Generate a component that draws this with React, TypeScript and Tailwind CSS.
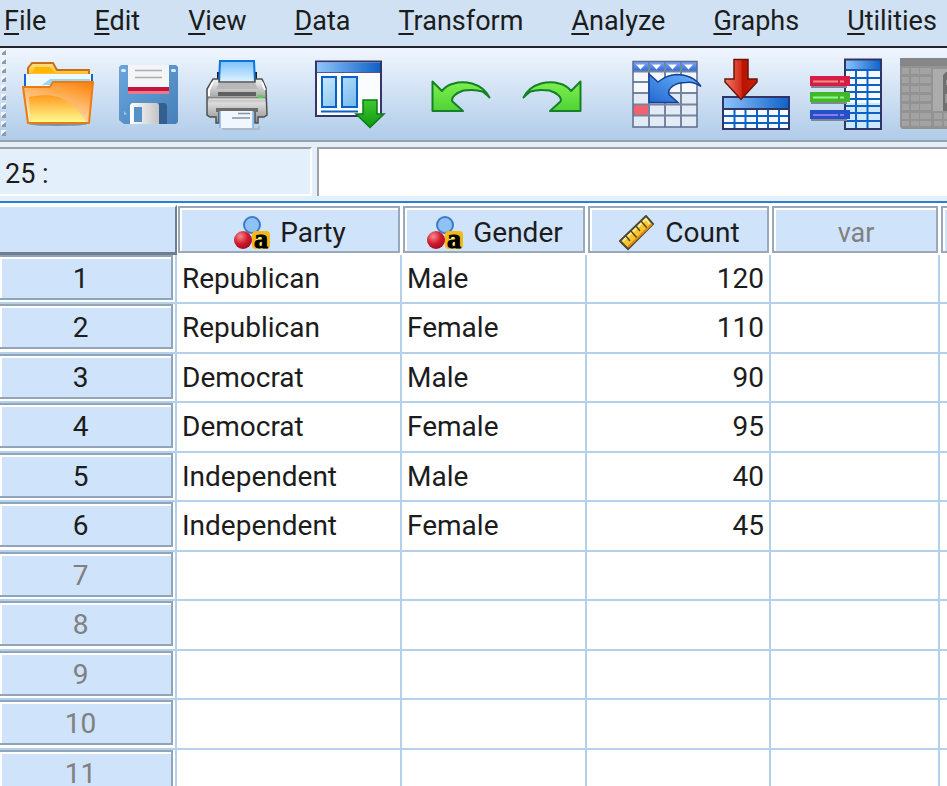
import { useState } from 'react';
import type { ReactNode } from 'react';

interface Column {
  name: string;
  type?: 'nominal' | 'scale';
  width: string;
}

interface Row {
  party: string;
  gender: string;
  count: number;
}

const menus = ['File', 'Edit', 'View', 'Data', 'Transform', 'Analyze', 'Graphs', 'Utilities'];

const columns: Column[] = [
  { name: 'Party', type: 'nominal', width: 'w-[225px]' },
  { name: 'Gender', type: 'nominal', width: 'w-[185px]' },
  { name: 'Count', type: 'scale', width: 'w-[184px]' },
  { name: 'var', width: 'w-[169px]' },
  { name: '', width: 'w-[169px]' },
];

const rows: Row[] = [
  { party: 'Republican', gender: 'Male', count: 120 },
  { party: 'Republican', gender: 'Female', count: 110 },
  { party: 'Democrat', gender: 'Male', count: 90 },
  { party: 'Democrat', gender: 'Female', count: 95 },
  { party: 'Independent', gender: 'Male', count: 40 },
  { party: 'Independent', gender: 'Female', count: 45 },
];

const rowNumbers = [1, 2, 3, 4, 5, 6, 7, 8, 9, 10, 11];

function ToolButton({ label, disabled, children }: { label: string; disabled?: boolean; children: ReactNode }) {
  return (
    <button type="button" aria-label={label} disabled={disabled} className="shrink-0">
      <svg width="72" height="72" viewBox="0 0 72 72" className="block overflow-visible">
        {children}
      </svg>
    </button>
  );
}

function Gradients() {
  return (
    <svg width="0" height="0" className="absolute" aria-hidden="true">
      <defs>
        <linearGradient id="folderFront" x1="1" y1="0" x2="0.5" y2="1">
          <stop offset="0" stopColor="#ff7a08" />
          <stop offset="0.3" stopColor="#ffa03c" />
          <stop offset="1" stopColor="#ffe9c4" />
        </linearGradient>
        <linearGradient id="folderShine" x1="0" y1="0" x2="0" y2="1">
          <stop offset="0" stopColor="#ff9a1e" />
          <stop offset="1" stopColor="#fffb90" />
        </linearGradient>
        <linearGradient id="folderBack" x1="0" y1="0" x2="0" y2="1">
          <stop offset="0" stopColor="#ffe08a" />
          <stop offset="1" stopColor="#ffae00" />
        </linearGradient>
        <linearGradient id="floppy" x1="0" y1="0" x2="1" y2="1">
          <stop offset="0" stopColor="#6aa5dc" />
          <stop offset="1" stopColor="#4680b8" />
        </linearGradient>
        <linearGradient id="metal" x1="0" y1="0" x2="1" y2="0">
          <stop offset="0" stopColor="#ffffff" />
          <stop offset="1" stopColor="#c4c4c4" />
        </linearGradient>
        <linearGradient id="printer" x1="0" y1="0" x2="0" y2="1">
          <stop offset="0" stopColor="#f4f4f4" />
          <stop offset="0.4" stopColor="#a8a8a8" />
          <stop offset="0.55" stopColor="#dcdcdc" />
          <stop offset="1" stopColor="#8d8d8d" />
        </linearGradient>
        <linearGradient id="sheet" x1="0" y1="0" x2="0" y2="1">
          <stop offset="0" stopColor="#7cc3fb" />
          <stop offset="1" stopColor="#e4f5ff" />
        </linearGradient>
        <linearGradient id="titleBar" x1="0" y1="0" x2="1" y2="0">
          <stop offset="0" stopColor="#8fc4fb" />
          <stop offset="1" stopColor="#0f62c8" />
        </linearGradient>
        <linearGradient id="pane" x1="0" y1="0" x2="1" y2="1">
          <stop offset="0" stopColor="#c8eafc" />
          <stop offset="1" stopColor="#74b8ec" />
        </linearGradient>
        <linearGradient id="greenFill" x1="0" y1="0" x2="0" y2="1">
          <stop offset="0" stopColor="#3fc830" />
          <stop offset="1" stopColor="#0d9a12" />
        </linearGradient>
        <linearGradient id="curve" x1="0" y1="0" x2="0" y2="1">
          <stop offset="0" stopColor="#7df04e" />
          <stop offset="1" stopColor="#50d236" />
        </linearGradient>
        <linearGradient id="blueCurve" x1="1" y1="0" x2="0" y2="1">
          <stop offset="0" stopColor="#6db8ff" />
          <stop offset="1" stopColor="#2468cf" />
        </linearGradient>
        <linearGradient id="redArrow" x1="0" y1="0" x2="1" y2="0">
          <stop offset="0" stopColor="#ef7a6c" />
          <stop offset="0.5" stopColor="#d52c1a" />
          <stop offset="0.55" stopColor="#b51400" />
          <stop offset="1" stopColor="#c8200c" />
        </linearGradient>
        <linearGradient id="gridHead" x1="0" y1="0" x2="0" y2="1">
          <stop offset="0" stopColor="#82a8f4" />
          <stop offset="1" stopColor="#2f6ce0" />
        </linearGradient>
        <radialGradient id="redBall" cx="0.35" cy="0.3" r="0.7">
          <stop offset="0" stopColor="#f58a92" />
          <stop offset="0.6" stopColor="#d01a2c" />
          <stop offset="1" stopColor="#a80c20" />
        </radialGradient>
      </defs>
    </svg>
  );
}

function OpenIcon() {
  return (
    <>
      <ellipse cx="36" cy="66" rx="29" ry="2" fill="#5c6470" opacity="0.6" />
      <path d="M6 20V10l4-5h21l4 7h32v9z" fill="url(#folderBack)" stroke="#c4701c" strokeWidth="2" />
      <path d="M10 15l3-6h15l5 6z" fill="#ffb700" />
      <path d="M3 16h67v16H3z" fill="#eef8ff" />
      <path d="M20 27l8-6h40v6z" fill="#9bd5fa" />
      <path d="M3 16v14M70 16v14" stroke="#1c62c8" strokeWidth="2" />
      <path d="M1 29h27l3-5h40l-4 41H6z" fill="url(#folderFront)" />
      <path d="M7 39c22-5 43-1 57 25H8z" fill="url(#folderShine)" />
      <path d="M1 29h27l3-5h40l-4 41H6z" fill="none" stroke="#e97c12" strokeWidth="2" strokeLinejoin="round" />
    </>
  );
}

function SaveIcon() {
  return (
    <>
      <path d="M9 7h55l2 2v55l-2 2H12l-5-4V9z" fill="url(#floppy)" />
      <path d="M16 7h41v23H16z" fill="#f4f5f7" />
      <path d="M23 12.500h27M23 19.500h27" stroke="#a9adb2" strokeWidth="1.500" />
      <path d="M16 29h41v4H16z" fill="#c8123e" />
      <path d="M16 33h41v3H16z" fill="#e57b90" />
      <rect x="9" y="11" width="5" height="3" rx="1.500" fill="#dcebfa" />
      <rect x="59" y="11" width="5" height="3" rx="1.500" fill="#dcebfa" />
      <path d="M47 45h6l2 2v19h-8z" fill="#33608f" />
      <path d="M20 45h25l2 2v19H18V47z" fill="url(#metal)" />
      <path d="M22 49h8v15h-8z" fill="#5490ca" />
      <path d="M12 53l3 3-3 1z" fill="#9bc4ea" />
    </>
  );
}

function PrintIcon() {
  return (
    <>
      <path d="M15 14h5v9h-5zM50 14h5v9h-5z" fill="#1c1c1c" />
      <path d="M18 3h34l1 22H17z" fill="url(#sheet)" stroke="#0c74dc" strokeWidth="2" />
      <path d="M11 21h6v3h36v-3h7l4 9 1 27-3 2h-6v6h-3V52H17v13h-3v-6H8l-3-2V31z" fill="url(#printer)" stroke="#505050" strokeWidth="1.500" />
      <path d="M17 25h36l3 6H14z" fill="#b8b8b8" />
      <path d="M11 24l-4 8v6M60 24l3 8" stroke="#ffffff" strokeWidth="2" fill="none" />
      <path d="M16 34h38v4H16z" fill="#606060" />
      <path d="M6 40h58" stroke="#777777" strokeWidth="1.500" />
      <path d="M7 41h56" stroke="#f2f2f2" />
      <rect x="56" y="37" width="5" height="3" rx="1" fill="#45dc45" />
      <path d="M14 50h42v4H14z" fill="#6c6c6c" />
      <path d="M18 53h33v17H18z" fill="#f0f7ff" />
      <path d="M18 53v17M51 53v17" stroke="#7db4e6" strokeWidth="1.500" />
      <path d="M36 55.500h12M30 60h18" stroke="#8a929c" strokeWidth="1.500" />
      <path d="M20 71h37v-3" stroke="#a9b3bf" strokeWidth="1.500" fill="none" />
    </>
  );
}

function RecallIcon() {
  return (
    <>
      <path d="M2 3.500h65V58H2z" fill="#fafdff" stroke="#35356c" strokeWidth="2" />
      <path d="M3 4.500h63v10H3z" fill="url(#titleBar)" />
      <path d="M3 14.500h63" stroke="#55558c" />
      <path d="M8 19h14v30H8zM28 19h15v30H28z" fill="url(#pane)" stroke="#0a60c6" strokeWidth="2" />
      <path d="M7 53.500h37" stroke="#0a60c6" strokeWidth="2" />
      <path d="M49 42h14v14h7L56 69.500 42 56h7z" fill="url(#greenFill)" stroke="#0c7a14" strokeWidth="1.500" />
    </>
  );
}

function CurvedArrow() {
  return (
    <path
      d="M6.500 23.500L16 33c3-4 7-6.500 12-7.500 6-2 12-1.500 18 0 7 2 14 7 17.500 14-3-3-5-5-7-6-6-2-12-2-19-1-7 2-13 7-11 11L37 53H6.500z"
      fill="url(#curve)"
      stroke="#14802a"
      strokeWidth="2"
      strokeLinejoin="round"
    />
  );
}

function GoToCaseIcon() {
  return (
    <>
      <path d="M3 3.500h64V69H3z" fill="#f5f8fc" />
      <path d="M3 35h64v34H3z" fill="#e2ebf5" />
      <path d="M3 3.500h64V13H3z" fill="url(#gridHead)" />
      <path d="M6 6.500h9l-4.500 5zM22 6.500h9l-4.500 5zM38 6.500h9l-4.500 5zM54 6.500h9l-4.500 5z" fill="#ffffff" />
      <path d="M3 47h16v10H3z" fill="#f5606e" />
      <path d="M19 3.500V69M35 3.500V69M51 3.500V69M3 13.500h64M3 24h64M3 35h64M3 46.500h64M3 57.500h64" stroke="#76859e" strokeWidth="2" />
      <path d="M3 3.500h64V69H3z" fill="none" stroke="#5c6c8c" strokeWidth="1.500" />
      <path
        d="M19 16l9 8c5-4 10-7 18-7.500 11 0 19 3 25 12-6-4-10-5-15-4-10 0-19 5-17 12l9 8H19z"
        fill="url(#blueCurve)"
        stroke="#153f98"
        strokeWidth="1.500"
      />
    </>
  );
}

function GoToVariableIcon() {
  return (
    <>
      <path d="M3 39h66v32H3z" fill="#f4faff" />
      <path d="M3 39h66v12H3z" fill="url(#titleBar)" />
      <path d="M14.500 51v20M25.500 51v20M37 51v20M48 51v20M59 51v20M3 58h66M3 65h66" stroke="#0b62c4" strokeWidth="2" />
      <path d="M3 39h66v32H3zM3 51h66" fill="none" stroke="#303468" strokeWidth="2" />
      <path d="M14 1.500h14V21h9v3L21 41.500 5 24v-3h9z" fill="url(#redArrow)" stroke="#6e1208" strokeWidth="1.500" />
    </>
  );
}

function VariablesIcon() {
  return (
    <>
      <path d="M35 1.500h36V71H35z" fill="#f4faff" />
      <path d="M35 45h36v26H35z" fill="#cde8fb" />
      <path d="M35 1.500h36V12H35z" fill="url(#titleBar)" />
      <path
        d="M46 12v59M57.500 12v59M35 12h36M35 20h36M35 27h36M35 34h36M35 41h36M35 48h36M35 55h36M35 63h36"
        stroke="#0b62c4"
        strokeWidth="2"
      />
      <path d="M35 1.500h36V71H35z" fill="none" stroke="#303468" strokeWidth="2" />
      <path d="M1 29h36M1 45h36M1 62h36" stroke="#7c8894" strokeWidth="2" />
      <path d="M0 18h40v10H0z" fill="#d81c48" />
      <path d="M3 23.500h25M30 23.500h4" stroke="#f59080" strokeWidth="2" />
      <path d="M0 34h40v10H0z" fill="#42b828" />
      <path d="M3 39.500h25M30 39.500h4" stroke="#90f890" strokeWidth="2" />
      <path d="M0 52h40v9H0z" fill="#2450c8" />
      <path d="M3 57h25M30 57h4" stroke="#8f78f0" strokeWidth="2" />
    </>
  );
}

function FindIcon() {
  return (
    <>
      <path d="M0 0h72v71H2l-2-2z" fill="#939393" />
      <path d="M0 0h72v8H0z" fill="#868686" />
      <path
        d="M2 10h7v6H2zM11 10h8v6h-8zM20 10h11v6H20zM2 19h7v6H2zM11 19h8v6h-8zM20 19h11v6H20zM2 28h7v6H2zM11 28h8v6h-8zM20 28h11v6H20zM2 37h7v6H2zM11 37h8v6h-8zM20 37h11v6H20zM2 46h7v6H2zM11 46h8v6h-8zM20 46h11v6H20z"
        fill="#a3a3a3"
      />
      <path
        d="M2 55h7v6H2zM11 55h8v6h-8zM20 55h11v6H20zM34 55h8v6h-8zM44 55h10v6H44zM2 63h7v5H2zM11 63h8v5h-8zM20 63h11v5H20zM34 63h8v5h-8zM44 63h10v5H44z"
        fill="#a3a3a3"
      />
      <path d="M33 11h39v42H33z" fill="#acacac" />
      <path d="M43 17l3-3h8v39H43z" fill="#707070" />
      <path d="M46 22h8v5h-8zM45 36h9v9h-9z" fill="#989898" />
    </>
  );
}

function NominalIcon() {
  return (
    <svg width="36" height="36" viewBox="0 0 36 36" aria-hidden="true" className="shrink-0 overflow-visible">
      <circle cx="18" cy="10" r="8" fill="#8fc2f4" stroke="#3c7cc6" strokeWidth="2" />
      <circle cx="9" cy="25" r="9" fill="url(#redBall)" />
      <rect x="18" y="16" width="18" height="18" rx="4" fill="#f5b914" />
      <rect x="22" y="20" width="10" height="12" fill="#fff06c" />
      <text x="27" y="33" textAnchor="middle" fontSize="28" fontWeight="bold" fontFamily="Liberation Serif, serif" fill="#000000" stroke="#000000">
        a
      </text>
    </svg>
  );
}

function ScaleIcon() {
  return (
    <svg width="36" height="36" viewBox="0 0 36 36" aria-hidden="true" className="shrink-0">
      <path d="M1 26L27 1l7 8L9 34z" fill="#f8c62c" stroke="#4c4630" strokeWidth="2" />
      <path d="M4 26L27 4l4 5" fill="none" stroke="#ffec9c" strokeWidth="2" />
      <path d="M7 21l4 5M12 16l6 7M17 11l4 5M22 6l6 7" stroke="#54451c" strokeWidth="1.500" />
      <path d="M9 32L33 9" stroke="#e08e14" strokeWidth="2" />
    </svg>
  );
}

export default function App() {
  const [cellValue, setCellValue] = useState('');

  return (
    <div className="flex h-screen flex-col overflow-hidden bg-white font-['Roboto','Liberation_Sans',sans-serif] text-[28px] leading-8 text-[#1c1c1c]">
      <Gradients />

      {/* Menu bar */}
      <nav className="flex h-[46px] shrink-0 items-center gap-12 bg-[#cfe1f3] pb-1 pl-1 text-[27px]">
        {menus.map((menu) => (
          <button key={menu} type="button" className="shrink-0">
            <span className="underline decoration-2 underline-offset-3">{menu[0]}</span>
            {menu.slice(1)}
          </button>
        ))}
      </nav>

      {/* Toolbar */}
      <div className="flex h-[96px] shrink-0 items-center border-t-2 border-b-2 border-t-[#24242c] border-b-[#98a0aa] bg-linear-to-b from-[#f0f6fe] to-[#b0cce9]">
        <svg width="8" height="92" viewBox="0 0 8 92" aria-hidden="true" className="shrink-0">
          {[0, 1, 2, 3, 4, 5, 6, 7, 8, 9].map((i) => (
            <g key={i}>
              <rect x="1" y={1 + i * 9} width="5" height="5" fill="#f4f8fd" />
              <path d={`M6 ${2 + i * 9}v5H2v-2z`} fill="#8b9aae" />
            </g>
          ))}
        </svg>
        <div className="ml-[14px] flex gap-[18px]">
          <ToolButton label="Open data document"><OpenIcon /></ToolButton>
          <ToolButton label="Save this document"><SaveIcon /></ToolButton>
          <ToolButton label="Print"><PrintIcon /></ToolButton>
        </div>
        <div className="ml-10 flex">
          <ToolButton label="Recall recently used dialogs"><RecallIcon /></ToolButton>
        </div>
        <div className="ml-10 flex gap-[18px]">
          <ToolButton label="Undo"><CurvedArrow /></ToolButton>
          <ToolButton label="Redo">
            <g transform="translate(71 0) scale(-1 1)">
              <CurvedArrow />
            </g>
          </ToolButton>
        </div>
        <div className="ml-[42px] flex gap-[18px]">
          <ToolButton label="Go to case"><GoToCaseIcon /></ToolButton>
          <ToolButton label="Go to variable"><GoToVariableIcon /></ToolButton>
          <ToolButton label="Variables"><VariablesIcon /></ToolButton>
          <ToolButton label="Find" disabled><FindIcon /></ToolButton>
        </div>
      </div>

      {/* Cell reference and editor */}
      <div className="flex h-[61px] shrink-0 gap-[5px] border-b-2 border-[#2f80cc] bg-[#e3effb] pt-[5px] pb-[5px]">
        <label htmlFor="cell-editor" className="flex w-[312px] shrink-0 items-center border-t-2 border-r-2 border-b-2 border-t-[#a0a0a4] border-r-white border-b-white pt-1 pl-[5px] text-[27px]">
          25 :
        </label>
        <input
          id="cell-editor"
          value={cellValue}
          onChange={(e) => setCellValue(e.target.value)}
          className="min-w-0 flex-1 border-t-2 border-l-2 border-[#a0a0a4] bg-white px-2 outline-none"
        />
      </div>

      {/* Data grid */}
      <table className="w-[1109px] table-fixed border-separate border-spacing-0">
        <thead>
          <tr className="h-[52px]">
            <th className="w-[177px] p-0 pt-[2px] align-top">
              <div className="h-[50px] border-t-2 border-r-2 border-b-3 border-t-white border-r-[#6f7d8c] border-b-[#6f7d8c] bg-[#cfe3fb]" />
            </th>
            {columns.map((column, i) => (
              <th key={i} className={`${column.width} p-0 pt-[3px] pr-[2px] pl-px align-top font-normal`}>
                <div className="h-[47px] border-2 border-[#9aa8ba]">
                  <div className="flex h-full items-center justify-center gap-[10px] border-t-2 border-l-2 border-white bg-[#cfe3fb] pt-1">
                    {column.type === 'nominal' && <NominalIcon />}
                    {column.type === 'scale' && <ScaleIcon />}
                    <span className={column.type ? '' : 'text-[27px] text-[#808080]'}>{column.name}</span>
                  </div>
                </div>
              </th>
            ))}
          </tr>
        </thead>
        <tbody>
          {rowNumbers.map((number) => {
            const row = rows[number - 1];
            return (
              <tr key={number} className="odd:h-[49px] even:h-[50px] *:border-r-2 *:border-b-2 *:border-[#b4d1ec] *:p-0">
                <th className="align-top font-normal">
                  <div className="mr-[2px] h-[45px] border-t-2 border-r-2 border-b-2 border-[#94a4b8]">
                    <div className={`flex h-full items-center justify-center border-t-2 border-l-2 border-white bg-[#cfe3fb] pr-3 ${row ? '' : 'text-[#808080]'}`}>
                      {number}
                    </div>
                  </div>
                </th>
                <td className="pl-[5px]!">{row?.party}</td>
                <td className="pl-[5px]!">{row?.gender}</td>
                <td className="pr-[5px]! text-right">{row?.count}</td>
                <td />
                <td />
              </tr>
            );
          })}
        </tbody>
      </table>
    </div>
  );
}
